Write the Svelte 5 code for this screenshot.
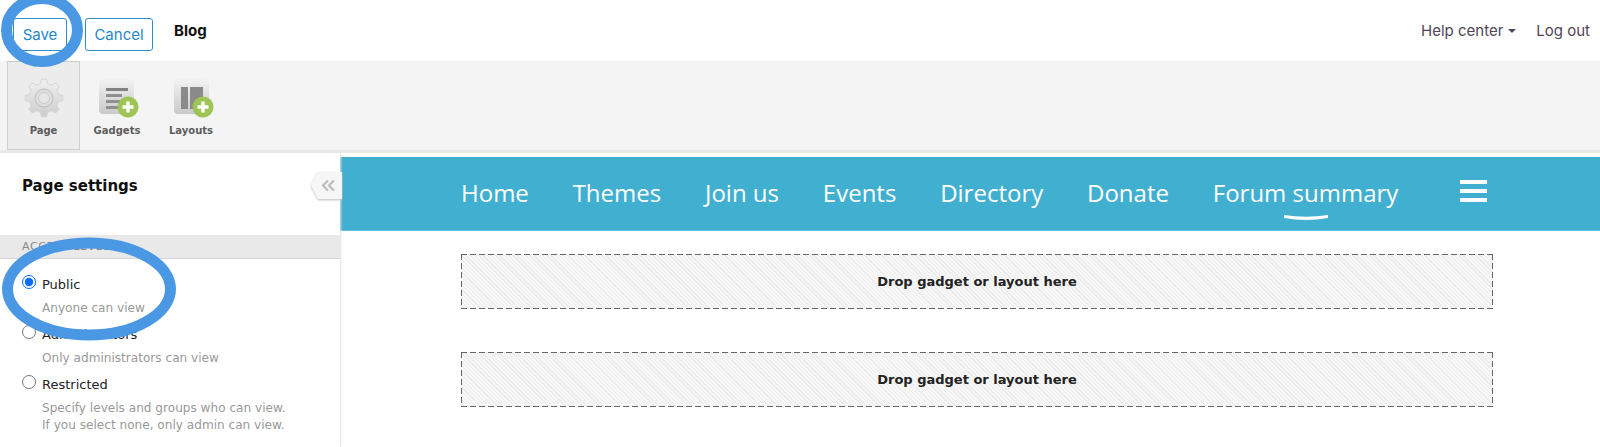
<script>
  const nav = [
    ['Home', 0], ['Themes', 0], ['Join us', 0], ['Events', 0], ['Directory', 0], ['Donate', 0], ['Forum summary', 1]
  ];
  const access = [
    { label: 'Public', desc: ['Anyone can view'], checked: true },
    { label: 'Administrators', desc: ['Only administrators can view'], checked: false },
    { label: 'Restricted', desc: ['Specify levels and groups who can view.', 'If you select none, only admin can view.'], checked: false }
  ];
  function gear(cx, cy, outer, inner, teeth) {
    const pts = [];
    const step = (Math.PI * 2) / teeth;
    for (let i = 0; i < teeth; i++) {
      const a = i * step - Math.PI / 2;
      for (const [off, r] of [[-0.3, inner], [-0.17, outer], [0.17, outer], [0.3, inner]]) {
        const t = a + off * step;
        pts.push((cx + Math.cos(t) * r).toFixed(2) + ',' + (cy + Math.sin(t) * r).toFixed(2));
      }
    }
    return 'M' + pts.join('L') + 'Z';
  }
  const gearPath = gear(20, 20, 19, 15, 8);
</script>

<div class="page">
  <header class="top">
    <div class="left">
      <button class="btn save">Save</button>
      <button class="btn cancel">Cancel</button>
      <strong class="title">Blog</strong>
    </div>
    <div class="right">
      <span class="link">Help center<i class="caret"></i></span>
      <span class="link">Log out</span>
    </div>
  </header>

  <div class="toolbar">
    <div class="tool active">
      <svg width="40" height="40" viewBox="0 0 40 40">
        <defs>
          <linearGradient id="gearFill" x1="0" y1="0" x2="0" y2="1">
            <stop offset="0" stop-color="#f0f0f0" />
            <stop offset="1" stop-color="#cdcdcd" />
          </linearGradient>
        </defs>
        <path d={gearPath} fill="url(#gearFill)" stroke="#cfcfcf" stroke-width="0.8" stroke-linejoin="round" />
        <circle cx="20" cy="20" r="9" fill="#dedede" stroke="#bcbcbc" />
        <circle cx="20" cy="20" r="5.5" fill="#e6e6e6" stroke="#cacaca" />
      </svg>
      <span>Page</span>
    </div>
    <div class="tool">
      <svg class="shift" width="42" height="40" viewBox="0 0 42 40">
        <defs>
          <linearGradient id="tileFill" x1="0" y1="0" x2="0" y2="1">
            <stop offset="0" stop-color="#f2f2f2" />
            <stop offset="1" stop-color="#c9c9c9" />
          </linearGradient>
        </defs>
        <rect x="1" y="1" width="35" height="35" rx="4" fill="url(#tileFill)" />
        <rect x="8" y="10" width="22" height="3" fill="#828282" />
        <rect x="8" y="16" width="16" height="3" fill="#8f8f8f" />
        <rect x="8" y="22" width="20" height="3" fill="#8f8f8f" />
        <rect x="8" y="28" width="12" height="3" fill="#8f8f8f" />
        <circle cx="30" cy="29" r="10.5" fill="#9dc454" />
        <path d="M30 23.5v11M24.5 29h11" stroke="#fff" stroke-width="3.4" />
      </svg>
      <span>Gadgets</span>
    </div>
    <div class="tool">
      <svg class="shift" width="42" height="40" viewBox="0 0 42 40">
        <rect x="1" y="1" width="35" height="35" rx="4" fill="url(#tileFill)" />
        <rect x="8" y="9" width="7" height="22" fill="#8a8a8a" />
        <rect x="17" y="9" width="13" height="22" fill="#8a8a8a" />
        <circle cx="30" cy="29" r="10.5" fill="#9dc454" />
        <path d="M30 23.5v11M24.5 29h11" stroke="#fff" stroke-width="3.4" />
      </svg>
      <span>Layouts</span>
    </div>
  </div>

  <div class="main">
    <aside class="side">
      <h2>Page settings</h2>
      <div class="section">ACCESS LEVEL</div>
      <div class="options">
        {#each access as o}
          <div class="opt">
            <label class="row">
              <input type="radio" name="access" checked={o.checked} />
              <span>{o.label}</span>
            </label>
            <div class="desc">
              {#each o.desc as line}<div>{line}</div>{/each}
            </div>
          </div>
        {/each}
      </div>
      <div class="tab">
        <svg width="15" height="13" viewBox="0 0 15 13">
          <path d="M7 1.5 2 6.5l5 5M13 1.5l-5 5 5 5" fill="none" stroke="#bdbdbd" stroke-width="2.2" />
        </svg>
      </div>
    </aside>

    <section class="content">
      <nav class="nav">
        {#each nav as [name, current]}
          <span class="item">{name}{#if current}<svg class="smile" width="44" height="7" viewBox="0 0 44 7"><path d="M0 1 Q22 4.5 44 1 L44 4 Q22 8 0 4Z" fill="#fff" /></svg>{/if}</span>
        {/each}
        <span class="burger"><i></i><i></i><i></i></span>
      </nav>
      <div class="drops">
        <div class="drop">Drop gadget or layout here</div>
        <div class="drop">Drop gadget or layout here</div>
      </div>
    </section>
  </div>

  <svg class="marks" width="1600" height="447" viewBox="0 0 1600 447">
    <ellipse cx="42" cy="30" rx="35.5" ry="31.5" fill="none" stroke="#4a98e3" stroke-width="11" />
    <ellipse cx="89" cy="289" rx="81.5" ry="46" fill="none" stroke="#4a98e3" stroke-width="11" />
  </svg>
</div>

<style>
  :global(body) { margin: 0; background: #fff; overflow: hidden; }
  .page { position: relative; width: 1600px; height: 447px; overflow: hidden; font-family: "DejaVu Sans", sans-serif; }
  .top { height: 61px; display: flex; justify-content: space-between; align-items: center; box-sizing: border-box; padding: 0 10px 0 13px; }
  .left { display: flex; align-items: center; }
  .btn { height: 33px; box-sizing: border-box; background: #fff; border: 1px solid #2b8fd0; border-radius: 3px; color: #1f87c9; font: 15px Inter, sans-serif; padding: 0; margin-top: 7px; }
  .save { width: 54px; margin-right: 18px; }
  .cancel { width: 68px; margin-right: 21px; }
  .title { font: 700 15px Inter, sans-serif; color: #111; margin-top: -1px; }
  .right { display: flex; gap: 20px; font: 15px Inter, sans-serif; color: #4f4558; }
  .link { display: flex; align-items: center; }
  .caret { width: 0; height: 0; border: 4px solid transparent; border-top-color: #4f4558; border-bottom: 0; margin-left: 5px; }
  .toolbar { height: 89px; background: #f4f4f4; border-bottom: 3px solid #e9e9ec; display: flex; padding-left: 7px; }
  .tool { width: 74px; box-sizing: border-box; display: flex; flex-direction: column; align-items: center; font-size: 10px; font-weight: 700; color: #5c5c5c; padding-top: 17px; gap: 6px; }
  .tool span { line-height: 14px; }
  .shift { margin-left: 4px; }
  .tool:nth-child(3) .shift { margin-left: 6px; }
  .active { width: 73px; background: #ececec; border: 1px solid #d0d0d0; border-top: 1px solid #c9c9c9; padding-top: 16px; }
  .main { display: flex; height: 294px; }
  .side { position: relative; z-index: 1; width: 340px; flex: none; box-sizing: border-box; box-shadow: 1px 0 2px #e4e4e4; }
  h2 { margin: 0; height: 82px; box-sizing: border-box; padding: 22px 0 0 22px; font-size: 15px; line-height: 22px; font-weight: 700; color: #111; }
  .section { height: 24px; line-height: 23px; box-sizing: border-box; background: #e9e9e9; border-bottom: 1px solid #d4d4d4; padding-left: 22px; font-size: 11px; letter-spacing: 0.6px; color: #888; }
  .options { padding: 14px 0 0 22px; }
  .opt { margin-bottom: 6px; }
  .row { display: flex; align-items: center; gap: 6px; height: 22px; font-size: 13px; color: #222; }
  input { width: 14px; height: 14px; margin: -4px 0 0; accent-color: #0a6cff; }
  .desc { margin: 5px 0 0 20px; font-size: 12.1px; line-height: 17px; color: #999; }
  .tab { position: absolute; left: 311px; top: 19px; width: 31px; height: 27px; filter: drop-shadow(0 1px 1px #bbb); display: flex; align-items: center; justify-content: center; }
  .tab::before { content: ""; position: absolute; inset: 0; background: #f6f6f6; clip-path: polygon(0 50%, 22% 0, 100% 0, 100% 100%, 22% 100%); }
  .tab svg { position: relative; left: 2px; }
  .content { flex: 1; min-width: 0; padding-top: 4px; }
  .nav { height: 74px; background: #41afcf; border-bottom: 1px solid #5ac3e0; box-sizing: border-box; display: flex; align-items: center; padding: 0 0 2px 121px; gap: 43.8px; color: #fff; font: 24px "Open Sans", sans-serif; }
  .item { position: relative; white-space: nowrap; }
  .smile { position: absolute; left: 71px; top: 38px; }
  .burger { display: flex; flex-direction: column; gap: 5px; width: 27px; margin: 0 0 3px 18px; }
  .burger i { height: 4px; background: #fff; }
  .drops { display: flex; flex-direction: column; gap: 43px; padding: 23px 107px 0 121px; }
  .drop {
    height: 55px; box-sizing: border-box; display: flex; align-items: center; justify-content: center;
    font-size: 13px; font-weight: 700; color: #222;
    background:
      repeating-linear-gradient(90deg, #666 0 6px, transparent 6px 9px) top / 100% 1px no-repeat,
      repeating-linear-gradient(90deg, #666 0 6px, transparent 6px 9px) bottom / 100% 1px no-repeat,
      repeating-linear-gradient(180deg, #666 0 6px, transparent 6px 9px) left / 1px 100% no-repeat,
      repeating-linear-gradient(180deg, #666 0 6px, transparent 6px 9px) right / 1px 100% no-repeat,
      repeating-linear-gradient(45deg, #f7f7f7 0 2px, #ececec 2px 3px);
  }
  .marks { position: absolute; left: 0; top: 0; z-index: 2; pointer-events: none; }
</style>
